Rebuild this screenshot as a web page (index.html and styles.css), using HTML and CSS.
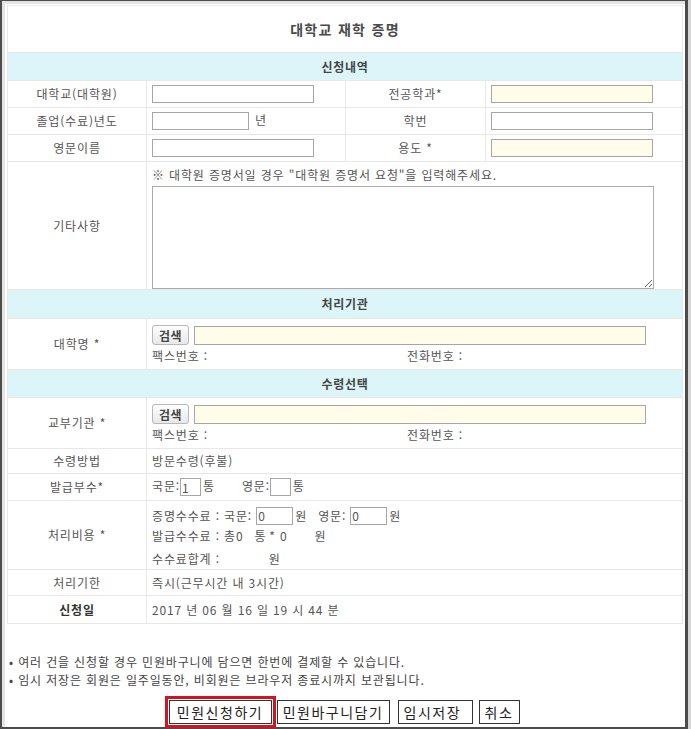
FILE: index.html
```html
<!DOCTYPE html>
<html lang="ko">
<head>
<meta charset="utf-8">
<title>대학교 재학 증명</title>
<link rel="stylesheet" href="styles.css">
</head>
<body>
<div class="frame">
  <table class="form">
    <colgroup><col class="c1"><col class="c2"><col class="c3"><col class="c4"></colgroup>
    <tr class="h-title"><th colspan="4" class="title">대학교 재학 증명</th></tr>
    <tr class="h-sec"><th colspan="4" class="sec">신청내역</th></tr>
    <tr class="h27">
      <th class="lb">대학교(대학원)</th><td class="val"><input class="in w162" type="text"></td>
      <th class="lb">전공학과*</th><td class="val"><input class="in w162 req" type="text"></td>
    </tr>
    <tr class="h27">
      <th class="lb">졸업(수료)년도</th><td class="val"><input class="in w97" type="text"><span class="unit">년</span></td>
      <th class="lb">학번</th><td class="val"><input class="in w162" type="text"></td>
    </tr>
    <tr class="h27">
      <th class="lb">영문이름</th><td class="val"><input class="in w162" type="text"></td>
      <th class="lb">용도 *</th><td class="val"><input class="in w162 req" type="text"></td>
    </tr>
    <tr class="h-etc">
      <th class="lb">기타사항</th>
      <td class="val etc" colspan="3">
        <div class="note">※ 대학원 증명서일 경우 "대학원 증명서 요청"을 입력해주세요.</div>
        <textarea class="ta"></textarea>
      </td>
    </tr>
    <tr class="h-sec2"><th colspan="4" class="sec">처리기관</th></tr>
    <tr class="h-org">
      <th class="lb">대학명 *</th>
      <td class="val" colspan="3">
        <div class="line1"><button class="search" type="button">검색</button><input class="in w452 req" type="text"></div>
        <div class="line2"><span class="fax">팩스번호 :</span><span>전화번호 :</span></div>
      </td>
    </tr>
    <tr class="h-sec3"><th colspan="4" class="sec">수령선택</th></tr>
    <tr class="h-org">
      <th class="lb">교부기관 *</th>
      <td class="val" colspan="3">
        <div class="line1"><button class="search" type="button">검색</button><input class="in w452 req" type="text"></div>
        <div class="line2"><span class="fax">팩스번호 :</span><span>전화번호 :</span></div>
      </td>
    </tr>
    <tr class="h25">
      <th class="lb">수령방법</th><td class="val" colspan="3">방문수령(후불)</td>
    </tr>
    <tr class="h27">
      <th class="lb">발급부수*</th>
      <td class="val" colspan="3"><span class="cnt">국문:<input class="in sm" type="text" value="1"><span class="u2">통</span></span><span class="cnt en">영문:<input class="in sm" type="text"><span class="u2">통</span></span></td>
    </tr>
    <tr class="h-fee">
      <th class="lb">처리비용 *</th>
      <td class="val fee" colspan="3">
        <div class="fl1">증명수수료 : 국문: <input class="in md" type="text" value="0"><span class="u2">원</span><span class="en2">영문: </span><input class="in md" type="text" value="0"><span class="u2">원</span></div>
        <div class="fl2">발급수수료 : 총0<span class="t1">통</span><span class="t2">* 0</span><span class="t3">원</span></div>
        <div class="fl3">수수료합계 :<span class="t4">원</span></div>
      </td>
    </tr>
    <tr class="h26">
      <th class="lb">처리기한</th><td class="val" colspan="3">즉시(근무시간 내 3시간)</td>
    </tr>
    <tr class="h28">
      <th class="lb strong">신청일</th><td class="val" colspan="3">2017 년 06 월 16 일 19 시 44 분</td>
    </tr>
  </table>

  <ul class="notes">
    <li>• 여러 건을 신청할 경우 민원바구니에 담으면 한번에 결제할 수 있습니다.</li>
    <li>• 임시 저장은 회원은 일주일동안, 비회원은 브라우저 종료시까지 보관됩니다.</li>
  </ul>

  <div class="actions">
    <button class="btn primary" type="button">민원신청하기</button>
    <button class="btn basket" type="button">민원바구니담기</button>
    <button class="btn save" type="button">임시저장&nbsp;</button>
    <button class="btn cancel" type="button">취소</button>
  </div>
</div>
</body>
</html>
```

FILE: styles.css
```css
* { box-sizing: border-box; }
html, body { margin: 0; padding: 0; }
body {
  width: 691px;
  height: 729px;
  overflow: hidden;
  background: #d6d6d6;
  font-family: "Noto Sans CJK KR", "Noto Sans", sans-serif;
  font-size: 12px;
  letter-spacing: 0.85px;
  color: #555;
}
.frame {
  width: 688px;
  height: 729px;
  background: #fff;
  border-style: solid;
  border-color: #4c4c4c;
  border-width: 1px 3px 2px 2px;
  box-shadow: inset 3px 3px 0 #e4e4e4;
  padding: 4px 0 0 5px;
}
.form {
  width: 675px;
  border-collapse: collapse;
  table-layout: fixed;
  border: 1px solid #dedede;
}
.c1 { width: 139px; }
.c2 { width: 199px; }
.c3 { width: 140px; }
.c4 { width: 197px; }
.form th, .form td {
  border: 1px solid #e8e8e8;
  padding: 0;
  font-weight: normal;
  line-height: 16px;
  vertical-align: middle;
}
.title {
  font-size: 14px;
  letter-spacing: 1.3px;
  font-weight: 700 !important;
  color: #4a4a4a;
  text-align: center;
  background: #fff;
}
.sec {
  background: #dcf5f8;
  font-weight: 700 !important;
  letter-spacing: 0.75px;
  color: #454545;
  text-align: center;
}
.h-title { height: 47px; }
.h-sec { height: 28px; }
.h-sec2 { height: 29px; }
.h-sec3 { height: 28px; }
.h27 { height: 27px; }
.h25 { height: 25px; }
.h26 { height: 26px; }
.h28 { height: 28px; }
.h-etc { height: 128px; }
.h-org { height: 51px; }
.h-fee { height: 69px; }
.lb { text-align: center; color: #555; }
.lb.strong { font-weight: 700 !important; color: #333; }
.val { padding-left: 5px !important; text-align: left; }
.in {
  height: 18px;
  border: 1px solid #a6a6a6;
  padding: 0 2px;
  margin: 0;
  font-family: inherit;
  font-size: 12px;
  color: #555;
  background: #fff;
  vertical-align: middle;
  border-radius: 0;
}
.req { background: #fffde9; }
.w162 { width: 162px; }
.w97 { width: 97px; }
.w452 { width: 452px; height: 19px; }
.unit { margin-left: 6px; }
.etc { vertical-align: top !important; padding-top: 5px !important; }
.note { height: 18px; line-height: 16px; }
.ta {
  display: block;
  width: 502px;
  height: 103px;
  border: 1px solid #ababab;
  margin: 1px 0 0;
  resize: both;
  font-family: inherit;
}
.line1 { display: flex; align-items: center; gap: 5px; height: 22px; margin-top: 2px; }
.line2 { height: 20px; line-height: 20px; }
.fax { display: inline-block; width: 255px; }
.search {
  width: 37px;
  height: 20px;
  padding: 0;
  border: 1px solid #b8b8b8;
  border-radius: 3px;
  background: linear-gradient(#fefefe, #e8e8e8);
  font-family: inherit;
  font-size: 12px;
  font-weight: 700;
  letter-spacing: 0.5px;
  color: #444;
}
.sm { width: 21px; height: 18px; padding: 0 1px; }
.md { width: 37px; height: 18px; padding: 0 1px; }
.u2 { margin-left: 2px; }
.cnt { display: inline-block; }
.cnt.en { margin-left: 27px; }
.en2 { margin-left: 11px; }
.fee { vertical-align: top !important; padding-top: 4px !important; }
.fl1 { height: 21px; display: flex; align-items: center; white-space: pre; }
.fl2 { height: 19px; line-height: 19px; }
.fl3 { height: 19px; line-height: 19px; margin-top: 4px; }
.t1 { margin-left: 11px; }
.t2 { margin-left: 3px; }
.t3 { margin-left: 27px; }
.t4 { margin-left: 49px; }
.notes {
  list-style: none;
  margin: 29px 0 0;
  padding: 0 0 0 2px;
  color: #444;
}
.notes li { height: 18px; line-height: 18px; }
.actions {
  display: flex;
  justify-content: center;
  align-items: center;
  margin-top: 11px;
  padding-right: 4px;
}
.btn {
  height: 24px;
  padding: 0;
  border: 1px solid #333;
  background: #fff;
  font-family: inherit;
  font-size: 14px;
  letter-spacing: 1.5px;
  color: #222;
  border-radius: 0;
  text-align: center;
  white-space: nowrap;
}
.btn.primary {
  width: 103px;
  outline: 3px solid #d2141c;
  outline-offset: 1px;
  margin-right: 5px;
}
.btn.basket { width: 113px; margin-right: 8px; }
.btn.save { width: 75px; margin-right: 6px; }
.btn.cancel { width: 41px; }
```
